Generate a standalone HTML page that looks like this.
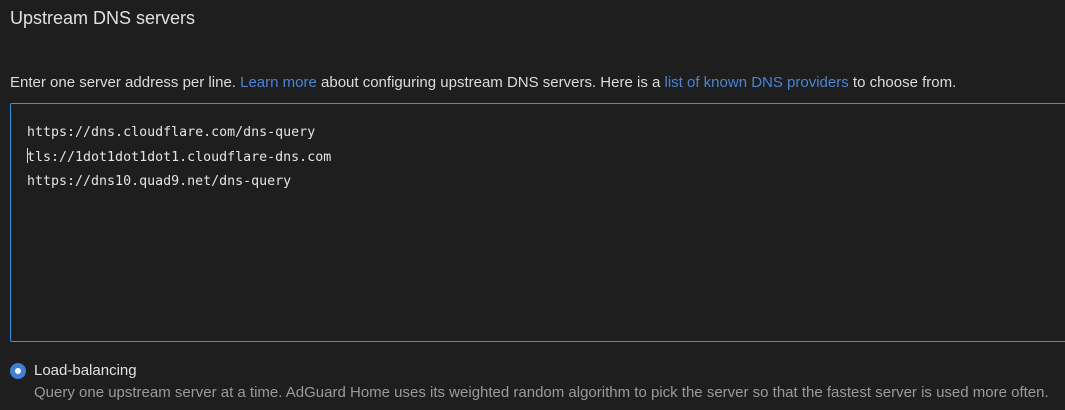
<!DOCTYPE html>
<html><head><style>
html,body{margin:0;width:1065px;height:410px;overflow:hidden;background:#1e1e1e;font-family:"Liberation Sans",sans-serif;color:#dcdcdc}
.t{position:absolute;left:10px;top:8px;font-size:18px;color:#e0e0e0}
.d{position:absolute;left:10px;top:74px;font-size:15px;color:#dcdcdc;white-space:nowrap}
a{color:#4a84d4;text-decoration:none}
.ta{position:absolute;left:10px;top:103px;width:1070px;height:239px;border:1px solid #3e8ee0;border-radius:2px;box-sizing:border-box}
.code{position:absolute;left:27px;top:121px;font-family:"DejaVu Sans Mono",monospace;font-size:13.3px;line-height:24.5px;color:#e4e4e4;white-space:pre}
.cur{position:absolute;left:27px;top:148px;width:1px;height:15px;background:#ddd}
.r{position:absolute;left:10px;top:363px;width:16px;height:16px;border-radius:50%;background:#3f7fd6}
.r::after{content:"";position:absolute;left:5px;top:5px;width:6px;height:6px;border-radius:50%;background:#fff}
.l{position:absolute;left:34px;top:362px;font-size:15px;color:#e0e0e0}
.s{position:absolute;left:34px;top:384px;font-size:15px;color:#9a9a9a;white-space:nowrap}
</style></head><body>
<div class="t">Upstream DNS servers</div>
<div class="d">Enter one server address per line. <a>Learn more</a> about configuring upstream DNS servers. Here is a <a>list of known DNS providers</a> to choose from.</div>
<div class="ta"></div>
<div class="code">https://dns.cloudflare.com/dns-query
tls://1dot1dot1dot1.cloudflare-dns.com
https://dns10.quad9.net/dns-query</div>
<div class="cur"></div>
<div class="r"></div>
<div class="l">Load-balancing</div>
<div class="s">Query one upstream server at a time. AdGuard Home uses its weighted random algorithm to pick the server so that the fastest server is used more often.</div>
</body></html>
